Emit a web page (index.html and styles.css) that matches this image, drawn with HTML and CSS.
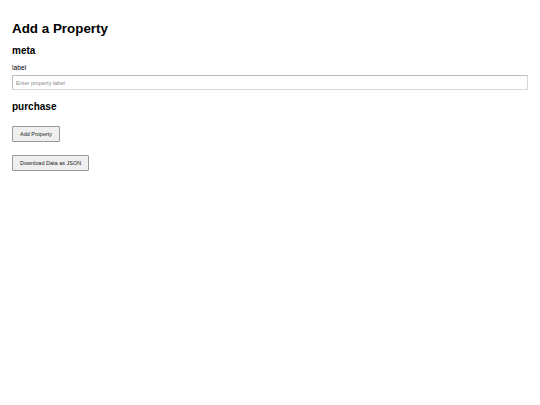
FILE: index.html
```html
<!DOCTYPE html>
<html>
<head>
<meta charset="utf-8">
<link rel="stylesheet" href="styles.css">
</head>
<body>
<div class="page">
  <h1 class="title">Add a Property</h1>
  <h2 class="section">meta</h2>
  <label class="field-label" for="label">label</label>
  <input class="field-input" id="label" type="text" placeholder="Enter property label">
  <h2 class="section section-purchase">purchase</h2>
  <div class="actions">
    <button class="btn">Add Property</button>
    <button class="btn">Download Data as JSON</button>
  </div>
</div>
</body>
</html>
```

FILE: styles.css
```css
html, body {
  margin: 0;
  padding: 0;
  background: #ffffff;
}
body {
  font-family: "Liberation Sans", Arial, sans-serif;
  color: #000;
}
.page {
  padding: 0 12px;
  display: flex;
  flex-direction: column;
  align-items: flex-start;
}
.title {
  font-size: 13.4px;
  line-height: 16px;
  font-weight: bold;
  margin: 21px 0 0;
}
.section {
  font-size: 10px;
  line-height: 12px;
  font-weight: bold;
  margin: 8px 0 0;
}
.section-purchase {
  margin-top: 11px;
}
.field-label {
  font-size: 6.7px;
  line-height: 8px;
  margin-top: 7px;
}
.field-input {
  box-sizing: border-box;
  width: 516px;
  height: 15px;
  margin: 3px 0 0;
  padding: 0 3px;
  font-family: "Liberation Sans", Arial, sans-serif;
  font-size: 5.6px;
  border: 1px solid #bdbdbd;
  border-bottom-color: #d6d6d6;
  border-right-color: #d6d6d6;
  border-radius: 1px;
  outline: none;
}
.field-input::placeholder {
  color: #8a8a8a;
}
.actions {
  display: flex;
  flex-direction: column;
  align-items: flex-start;
  gap: 13px;
  margin-top: 13px;
}
.btn {
  box-sizing: border-box;
  height: 16px;
  padding: 0 7px;
  font-family: "Liberation Sans", Arial, sans-serif;
  font-size: 5.5px;
  font-weight: normal;
  color: #222;
  background: #efefef;
  border: 1px solid #999;
  border-radius: 1px;
}
```
